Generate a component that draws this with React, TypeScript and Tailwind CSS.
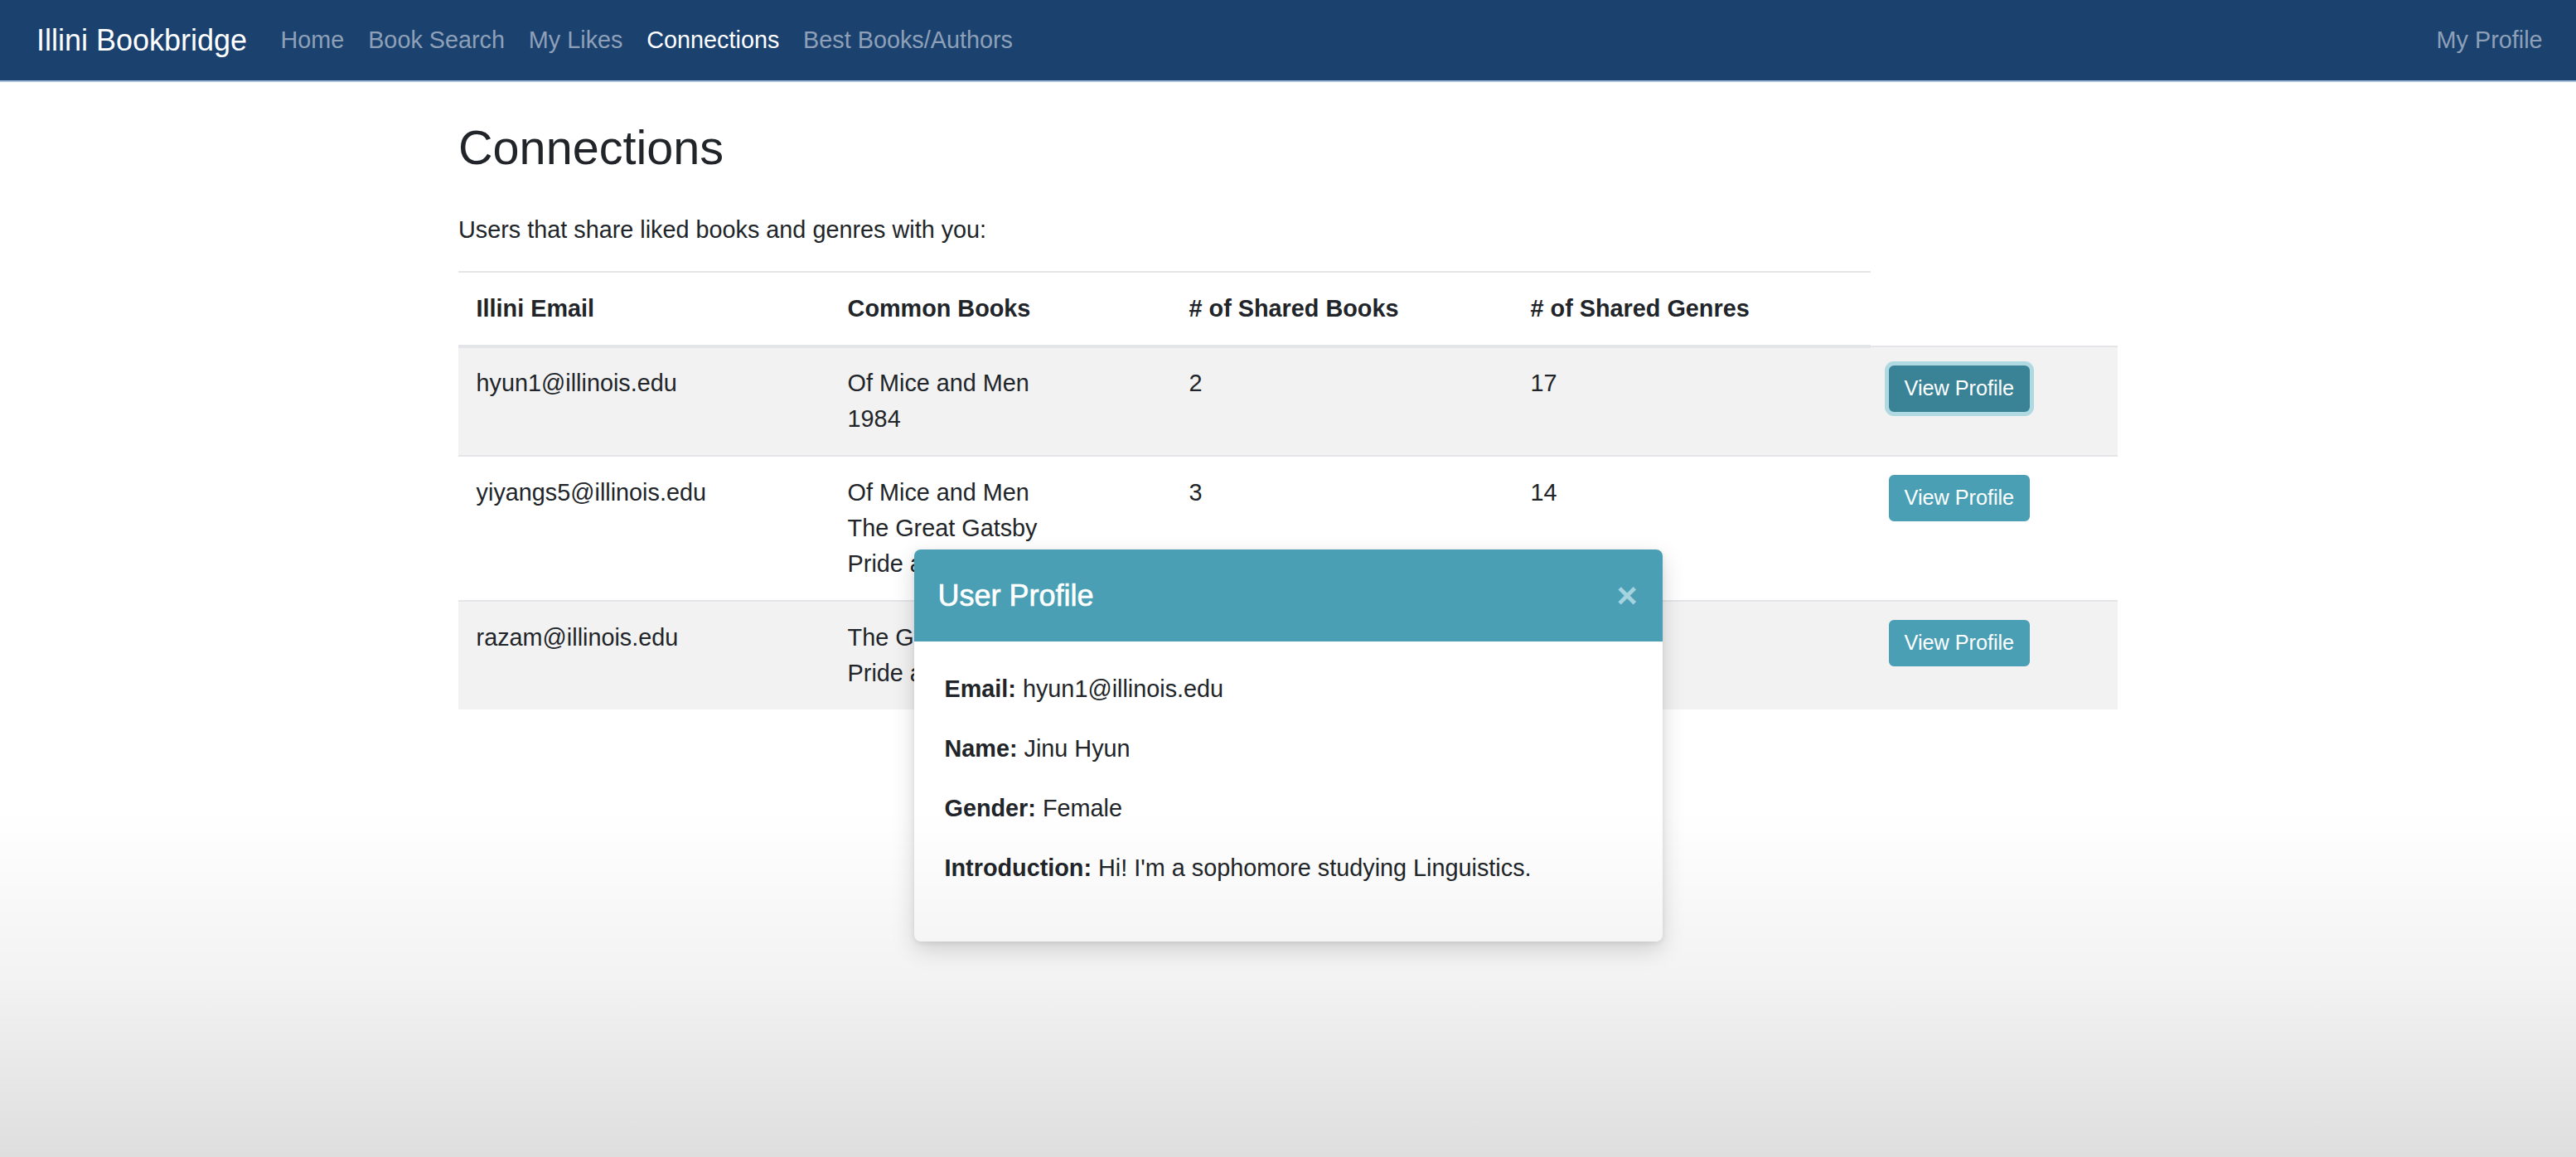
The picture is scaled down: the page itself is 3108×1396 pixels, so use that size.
import React from 'react';

interface Connection {
  email: string;
  books: string[];
  sharedBooks: number;
  sharedGenres: number;
}

const connections: Connection[] = [
  { email: 'hyun1@illinois.edu', books: ['Of Mice and Men', '1984'], sharedBooks: 2, sharedGenres: 17 },
  {
    email: 'yiyangs5@illinois.edu',
    books: ['Of Mice and Men', 'The Great Gatsby', 'Pride and Prejudice'],
    sharedBooks: 3,
    sharedGenres: 14,
  },
  { email: 'razam@illinois.edu', books: ['The Great Gatsby', 'Pride and Prejudice'], sharedBooks: 2, sharedGenres: 9 },
];

const navLinks = ['Home', 'Book Search', 'My Likes', 'Connections', 'Best Books/Authors'];

export default function App() {
  const selected = connections[0];

  return (
    <div
      className="relative min-h-screen bg-white text-[#212529] overflow-hidden"
      style={{ fontFamily: '"Liberation Sans", Arial, sans-serif' }}
    >
      {/* Navbar */}
      <nav className="flex items-center h-[97px] pl-[44px] pr-[26px] bg-[#1b416f] border-b-2 border-b-[#a9c1dc] box-content">
        <span className="text-[36px] leading-[54px] text-white mr-[26px]">Illini Bookbridge</span>
        {navLinks.map((link) => (
          <a
            key={link}
            className={`px-[14.4px] text-[28.8px] leading-[43.2px] ${
              link === 'Connections' ? 'text-white' : 'text-[#8da0b8]'
            }`}
          >
            {link}
          </a>
        ))}
        <a className="ml-auto px-[14.4px] text-[28.8px] leading-[43.2px] text-[#8da0b8]">My Profile</a>
      </nav>

      {/* Main */}
      <div className="w-[2002px] mx-auto">
        <h2 className="mt-[45px] mb-[43px] text-[57.6px] leading-[69px]">Connections</h2>
        <p className="mb-[28px] text-[28.8px] leading-[43.2px]">Users that share liked books and genres with you:</p>

        <table className="w-full table-fixed border-collapse text-[28.8px] leading-[43.2px]">
          <colgroup>
            <col className="w-[448px]" />
            <col className="w-[412px]" />
            <col className="w-[412px]" />
            <col className="w-[432px]" />
            <col className="w-[298px]" />
          </colgroup>
          <thead>
            <tr>
              {['Illini Email', 'Common Books', '# of Shared Books', '# of Shared Genres'].map((h) => (
                <th
                  key={h}
                  className="p-[21.6px] text-left font-bold align-bottom border-t-2 border-t-[#e3e5e8] border-b-[4px] border-b-[#e3e5e8]"
                >
                  {h}
                </th>
              ))}
            </tr>
          </thead>
          <tbody>
            {connections.map((c, i) => (
              <tr key={c.email} className={i % 2 === 0 ? 'bg-[#f2f2f2]' : 'bg-white'}>
                <td className="p-[21.6px] align-top border-t-2 border-t-[#e3e5e8]">{c.email}</td>
                <td className="p-[21.6px] align-top border-t-2 border-t-[#e3e5e8]">
                  {c.books.map((b) => (
                    <div key={b} className="whitespace-nowrap">{b}</div>
                  ))}
                </td>
                <td className="p-[21.6px] align-top border-t-2 border-t-[#e3e5e8]">{c.sharedBooks}</td>
                <td className="p-[21.6px] align-top border-t-2 border-t-[#e3e5e8]">{c.sharedGenres}</td>
                <td className="px-[21.6px] pt-[22px] pb-[21.6px] align-top border-t-2 border-t-[#e3e5e8]">
                  <button
                    className={`px-[17px] py-[7.2px] rounded-[6px] text-[25.2px] leading-[37.8px] text-white border-2 ${
                      i === 0
                        ? 'bg-[#3a8397] border-[#3a8397] shadow-[0_0_0_5px_rgba(96,186,204,0.45)]'
                        : 'bg-[#4a9fb5] border-[#4a9fb5]'
                    }`}
                  >
                    View Profile
                  </button>
                </td>
              </tr>
            ))}
          </tbody>
        </table>
      </div>

      {/* User profile modal */}
      <div className="absolute inset-x-0 top-[663px] flex justify-center z-10">
        <div className="w-[903px] bg-white rounded-[8px] shadow-[0_10px_28px_rgba(0,0,0,0.16),0_2px_6px_rgba(0,0,0,0.08)]">
          <div className="flex items-center justify-between h-[111px] pl-[29px] pr-[30px] bg-[#4a9fb4] rounded-t-[8px]">
            <h5 className="text-[36px] leading-[54px] text-white font-medium [-webkit-text-stroke:0.6px_white]">
              User Profile
            </h5>
            <span className="text-[43px] leading-[43px] font-bold text-[#a6d3e0]">×</span>
          </div>
          <div className="pl-[37px] pr-[29px] pt-[36px] pb-[38px] text-[28.8px] leading-[43.2px]">
            <p className="mb-[28.8px]">
              <b>Email:</b> {selected.email}
            </p>
            <p className="mb-[28.8px]">
              <b>Name:</b> Jinu Hyun
            </p>
            <p className="mb-[28.8px]">
              <b>Gender:</b> Female
            </p>
            <p className="mb-[28.8px]">
              <b>Introduction:</b> Hi! I'm a sophomore studying Linguistics.
            </p>
          </div>
        </div>
      </div>

      {/* Bottom screen fade */}
      <div className="pointer-events-none absolute inset-x-0 bottom-0 h-[420px] z-20 bg-gradient-to-b from-transparent via-black/[0.05] to-black/[0.13]" />
    </div>
  );
}
